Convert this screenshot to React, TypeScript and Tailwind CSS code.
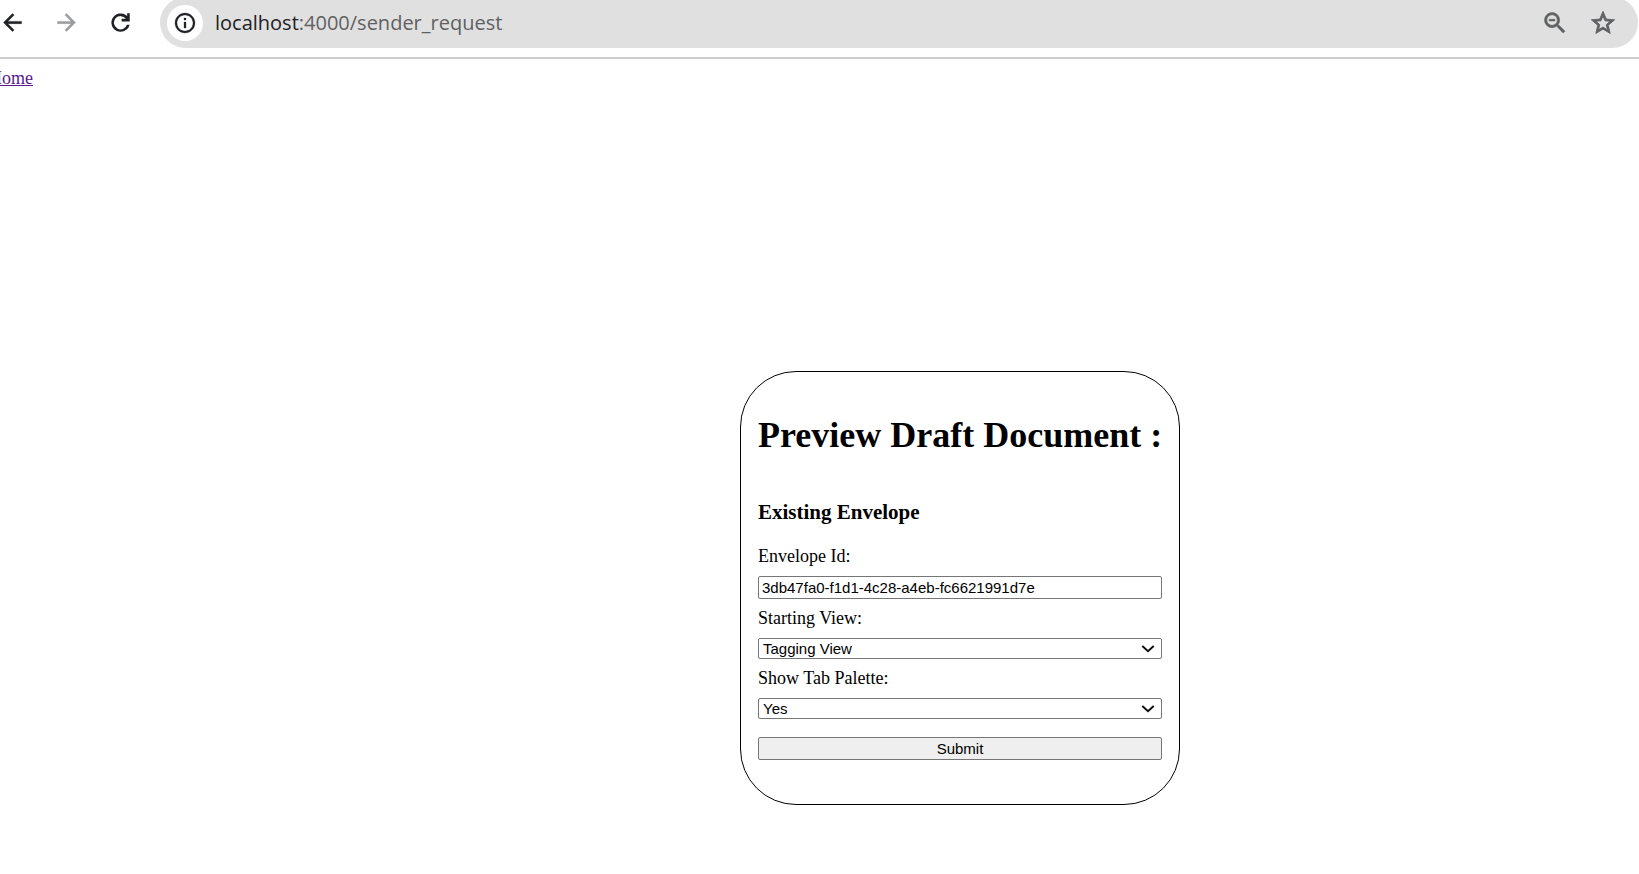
import type { ReactNode } from 'react';

const control =
  'block w-full rounded-xs border border-[#767676] font-["Liberation_Sans",Arial,sans-serif] text-[15px] text-black';

function Icon({ children, className }: { children: ReactNode; className: string }) {
  return (
    <svg viewBox="0 0 24 24" className={className} fill="currentColor" aria-hidden="true">
      {children}
    </svg>
  );
}

function Toolbar() {
  return (
    <header className="-mt-[3px] flex items-center border-b-2 border-[#cbcccc] pr-px pb-[9px]">
      <div className="-ml-px flex w-[161px] shrink-0 items-center gap-[27px]">
        <button type="button" aria-label="Back" className="text-[#202124]">
          <Icon className="size-[27px]">
            <path
              d="M20 11H7.83l5.59-5.59L12 4l-8 8 8 8 1.41-1.41L7.83 13H20v-2z"
              stroke="currentColor"
              strokeWidth=".4"
            />
          </Icon>
        </button>
        <button type="button" aria-label="Forward" className="text-[#9b9c9d]">
          <Icon className="size-[27px]">
            <path
              d="M12 4l-1.41 1.41L16.17 11H4v2h12.17l-5.58 5.59L12 20l8-8z"
              stroke="currentColor"
              strokeWidth=".4"
            />
          </Icon>
        </button>
        <button type="button" aria-label="Reload" className="text-[#202124]">
          <Icon className="size-[27px]">
            <path d="M12.1 20.3a8.2 8.2 0 1 1 5.8-14V3.7h2.3V11H13V8.7h3.8a5.9 5.9 0 1 0 .9 5.3h2.4a8.2 8.2 0 0 1-8 6.3z" />
          </Icon>
        </button>
      </div>
      <div className="flex h-[51px] flex-1 items-center rounded-full bg-[#e0e0e0] pr-[9px] pl-[7px]">
        <button
          type="button"
          aria-label="View site information"
          className="flex size-9 shrink-0 items-center justify-center rounded-full bg-white text-[#202124]"
        >
          <Icon className="size-6">
            <path
              d="M11 7h2v2h-2zm0 4h2v6h-2zm1-9C6.48 2 2 6.48 2 12s4.48 10 10 10 10-4.48 10-10S17.52 2 12 2zm0 18c-4.41 0-8-3.59-8-8s3.59-8 8-8 8 3.59 8 8-3.59 8-8 8z"
              stroke="currentColor"
              strokeWidth=".3"
            />
          </Icon>
        </button>
        <p className="ml-3 flex-1 font-['Open_Sans','Noto_Sans',sans-serif] text-[20px] leading-6 text-[#5f6062]">
          <span className="text-[#202124]">localhost</span>:4000/sender_request
        </p>
        <button type="button" aria-label="Zoom" className="mr-5 text-[#5f6062]">
          <Icon className="size-7">
            <path
              d="M15.5 14h-.79l-.28-.27A6.471 6.471 0 0 0 16 9.5 6.5 6.5 0 1 0 9.5 16c1.61 0 3.09-.59 4.23-1.57l.27.28v.79l5 4.99L20.49 19l-4.99-5zm-6 0C7.01 14 5 11.99 5 9.5S7.01 5 9.5 5 14 7.01 14 9.5 11.99 14 9.5 14zM7 8.8h5v1.4H7z"
              stroke="currentColor"
              strokeWidth=".5"
            />
          </Icon>
        </button>
        <button type="button" aria-label="Bookmark this page" className="mr-3 text-[#5f6062]">
          <Icon className="size-7">
            <path
              d="M22 9.24l-7.19-.62L12 2 9.19 8.63 2 9.24l5.46 4.73L5.82 21 12 17.27 18.18 21l-1.63-7.03L22 9.24zM12 15.4l-3.76 2.27 1-4.28-3.32-2.88 4.38-.38L12 6.1l1.71 4.04 4.38.38-3.32 2.88 1 4.28L12 15.4z"
              stroke="currentColor"
              strokeWidth=".7"
            />
          </Icon>
        </button>
      </div>
    </header>
  );
}

function SelectField({ id, label, options }: { id: string; label: string; options: string[] }) {
  return (
    <div>
      <label htmlFor={id} className="block leading-5">
        {label}
      </label>
      <div className="relative mt-[10px]">
        <select id={id} className={`${control} h-[21px] appearance-none bg-white pl-1 leading-[19px]`}>
          {options.map((option) => (
            <option key={option}>{option}</option>
          ))}
        </select>
        <svg
          viewBox="0 0 14 8"
          className="pointer-events-none absolute top-[7px] right-[7px] h-2 w-3.5"
          fill="none"
          stroke="#101010"
          strokeWidth="2"
          aria-hidden="true"
        >
          <path d="M1.3 .9L7 6.2l5.700-5.3" />
        </svg>
      </div>
    </div>
  );
}

export default function App() {
  return (
    <div className="overflow-hidden bg-white font-['Liberation_Serif','Times_New_Roman',serif] text-[18px] text-black">
      <Toolbar />
      <nav className="-ml-[11px] pt-[9px] leading-5">
        <a href="#home" className="text-[#551a8b] underline">
          Home
        </a>
      </nav>
      <main className="mt-[283px] flex justify-center pb-16 pl-[281px]">
        <form
          className="w-[440px] rounded-[56px] border border-black px-[17px] pt-[42px] pb-11"
          onSubmit={(event) => event.preventDefault()}
        >
          <h1 className="text-[36px] leading-[42px] font-bold whitespace-nowrap">Preview Draft Document :</h1>
          <h3 className="mt-11 text-[21px] leading-6 font-bold">Existing Envelope</h3>
          <div className="mt-[22px] flex flex-col gap-[9px]">
            <div>
              <label htmlFor="envelope-id" className="block leading-5">
                Envelope Id:
              </label>
              <input
                id="envelope-id"
                type="text"
                defaultValue="3db47fa0-f1d1-4c28-a4eb-fc6621991d7e"
                className={`${control} mt-[10px] h-[23px] bg-white px-[3px]`}
              />
            </div>
            <SelectField id="starting-view" label="Starting View:" options={['Tagging View', 'Recipient View']} />
            <SelectField id="tab-palette" label="Show Tab Palette:" options={['Yes', 'No']} />
          </div>
          <button type="submit" className={`${control} mt-[18px] h-[23px] bg-[#efefef] text-center leading-[21px]`}>
            Submit
          </button>
        </form>
      </main>
    </div>
  );
}
